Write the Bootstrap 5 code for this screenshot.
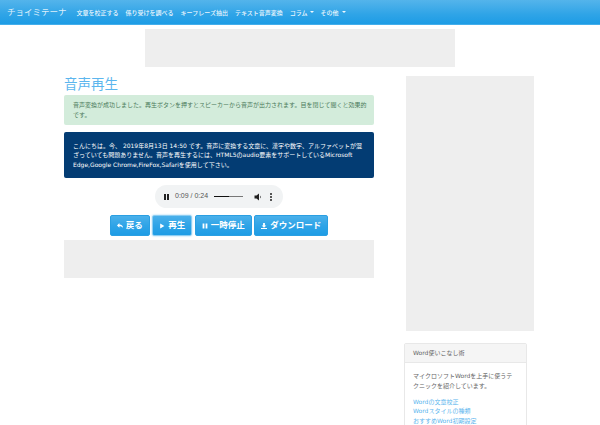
<!DOCTYPE html>
<html lang="ja">
<head>
    <meta charset="UTF-8">
    <meta name="viewport" content="width=device-width, initial-scale=1.0">
    <title>音声再生</title>
    <link href="https://cdn.jsdelivr.net/npm/bootstrap@5.3.0/dist/css/bootstrap.min.css" rel="stylesheet">
    <style>
        html, body { height: 425px; overflow: hidden; }
        body { font-family: "DejaVu Sans", "Noto Sans CJK JP", sans-serif; font-size: 6px; color: #555; background: #fff; }
        .top-bar { height: 25px; padding: 0 0 0 7px; background: linear-gradient(#54b4eb, #2fa4e7 60%, #1d9ce5); border-bottom: 1px solid #44aeeb; }
        .top-bar .navbar-brand { font-size: 8.5px; color: rgba(255,255,255,.85); padding: 0; margin: 0 6.5px 0 0; }
        .top-bar .nav-link { font-size: 6px; color: rgba(255,255,255,.92); padding: 0 3.5px; white-space: nowrap; font-weight: 500; }
        .top-bar .dropdown-toggle::after { border-top-width: 2px; border-left-width: 2px; border-right-width: 2px; margin-left: 2px; }
        .ad-top { width: 310px; height: 38px; margin: 4px auto 0; background: #eee; }
        .page-wrap { width: 470px; margin: 9px 0 0 64px; }
        .left-col { width: 310px; }
        .right-col { width: 128px; margin-left: 32px; }
        .page-title { font-size: 13.5px; line-height: 17px; color: #5cb6ee; font-weight: 400; margin: 0 0 2px; }
        .msg-ok { background: #d3ecdb; color: #4a7a5a; border-radius: 2px; padding: 4.500px 6px 4.500px 9px; line-height: 10px; height: 30px; margin: 0 0 7px; }
        .msg-text { background: #033c73; color: #fff; border-radius: 2px; padding: 8.500px 8px 8.500px 9px; line-height: 9.6px; height: 46px; margin: 0 0 7px; }
        .player { width: 128px; height: 23px; margin: 0 auto 7px; padding: 0 9px; background: #f1f3f4; border-radius: 12px; color: #555; font-family: "Liberation Sans", sans-serif; font-size: 7px; }
        .pause-mark { width: 5px; height: 6px; margin-right: 6px; border-left: 2px solid #222; border-right: 2px solid #222; }
        .time-label { margin-right: 6px; white-space: nowrap; }
        .seek-track { width: 29px; height: 1px; margin-right: 11px; background: #777; }
        .seek-track::before { content: ""; display: block; width: 15px; height: 1px; background: #111; }
        .vol-mark { margin-right: 8px; }
        .btn-row { gap: 2.500px; }
        .btn-blue { height: 21px; padding: 0 6px; font-size: 8.500px; line-height: 1; font-weight: 700; color: #fff; background: linear-gradient(#4ab0ea, #2fa4e7 50%, #1e9ce5); border: 1px solid #2a9fe2; border-radius: 2px; white-space: nowrap; }
        .btn-blue:hover { color: #fff; }
        .btn-blue.is-on { border-color: #8ccdf2; box-shadow: 0 0 2px #8ccdf2; }
        .btn-blue svg { width: 6px; height: 6px; fill: #fff; margin-right: 3px; }
        .ad-bottom { height: 38px; margin-top: 4px; background: #eee; }
        .ad-side { height: 255px; background: #eee; }
        .side-box { width: 123px; margin: 12px 0 0 -2px; border: 1px solid #e8e8e8; border-radius: 2px; color: #666; background: #fff; }
        .side-head { height: 19px; padding: 0 8px; line-height: 18px; background: #f5f5f5; border-bottom: 1px solid #e8e8e8; }
        .side-body { padding: 8px 8px; line-height: 10px; }
        .side-body p { margin: 0 0 6px; }
        .side-body a { display: block; line-height: 9.400px; color: #5cb6ee; text-decoration: none; }
    </style>
</head>
<body>
    <!-- ナビ -->
    <nav class="top-bar d-flex align-items-center">
        <a class="navbar-brand" href="#">チョイミテーナ</a>
        <ul class="nav flex-nowrap">
            <li class="nav-item"><a class="nav-link" href="#">文章を校正する</a></li>
            <li class="nav-item"><a class="nav-link" href="#">係り受けを調べる</a></li>
            <li class="nav-item"><a class="nav-link" href="#">キーフレーズ抽出</a></li>
            <li class="nav-item"><a class="nav-link" href="#">テキスト音声変換</a></li>
            <li class="nav-item"><a class="nav-link dropdown-toggle" href="#">コラム</a></li>
            <li class="nav-item"><a class="nav-link dropdown-toggle" href="#">その他 </a></li>
        </ul>
    </nav>

    <div class="ad-top"></div>

    <div class="page-wrap d-flex align-items-start">
        <div class="left-col">
            <h1 class="page-title">音声再生</h1>
            <div class="msg-ok">音声変換が成功しました。再生ボタンを押すとスピーカーから音声が出力されます。目を閉じて聞くと効果的です。</div>
            <div class="msg-text">こんにちは。今、 2019年8月13日 14:50 です。音声に変換する文章に、漢字や数字、アルファベットが混ざっていても問題ありません。音声を再生するには、HTML5のaudio要素をサポートしているMicrosoft Edge,Google Chrome,FireFox,Safariを使用して下さい。</div>

            <div class="player d-flex align-items-center">
                <span class="pause-mark"></span>
                <span class="time-label">0:09 / 0:24</span>
                <span class="seek-track"></span>
                <svg class="vol-mark" width="8" height="8" viewBox="0 0 16 16"><path d="M1 5h4l5-4v14l-5-4H1z" fill="#222"/><path d="M12 5a4 4 0 0 1 0 6z" fill="#222"/></svg>
                <svg width="2" height="8" viewBox="0 0 2 8"><circle cx="1" cy="1" r="1" fill="#222"/><circle cx="1" cy="4" r="1" fill="#222"/><circle cx="1" cy="7" r="1" fill="#222"/></svg>
            </div>

            <div class="btn-row d-flex justify-content-center">
                <button class="btn btn-blue" type="button"><svg viewBox="0 0 10 10"><path d="M0 4l4-4v2.500c4 0 6 2 6 6-1-2-3-3-6-3V8z"/></svg>戻る</button>
                <button class="btn btn-blue is-on" type="button"><svg viewBox="0 0 10 10"><path d="M2 1l7 4-7 4z"/></svg>再生</button>
                <button class="btn btn-blue" type="button"><svg viewBox="0 0 10 10"><path d="M1 1h3v8H1zM6 1h3v8H6z"/></svg>一時停止</button>
                <button class="btn btn-blue" type="button"><svg viewBox="0 0 10 10"><path d="M3.500 0h3v4H9L5 8 1 4h2.500zM0 8.500h10V10H0z"/></svg>ダウンロード</button>
            </div>

            <div class="ad-bottom"></div>
        </div>

        <div class="right-col">
            <div class="ad-side"></div>
            <div class="side-box">
                <div class="side-head">Word使いこなし術</div>
                <div class="side-body">
                    <p>マイクロソフトWordを上手に使うテクニックを紹介しています。</p>
                    <a href="#">Wordの文章校正</a>
                    <a href="#">Wordスタイルの種類</a>
                    <a href="#">おすすめWord初期設定</a>
                </div>
            </div>
        </div>
    </div>

    <script src="https://cdn.jsdelivr.net/npm/bootstrap@5.3.0/dist/js/bootstrap.bundle.min.js"></script>
</body>
</html>
